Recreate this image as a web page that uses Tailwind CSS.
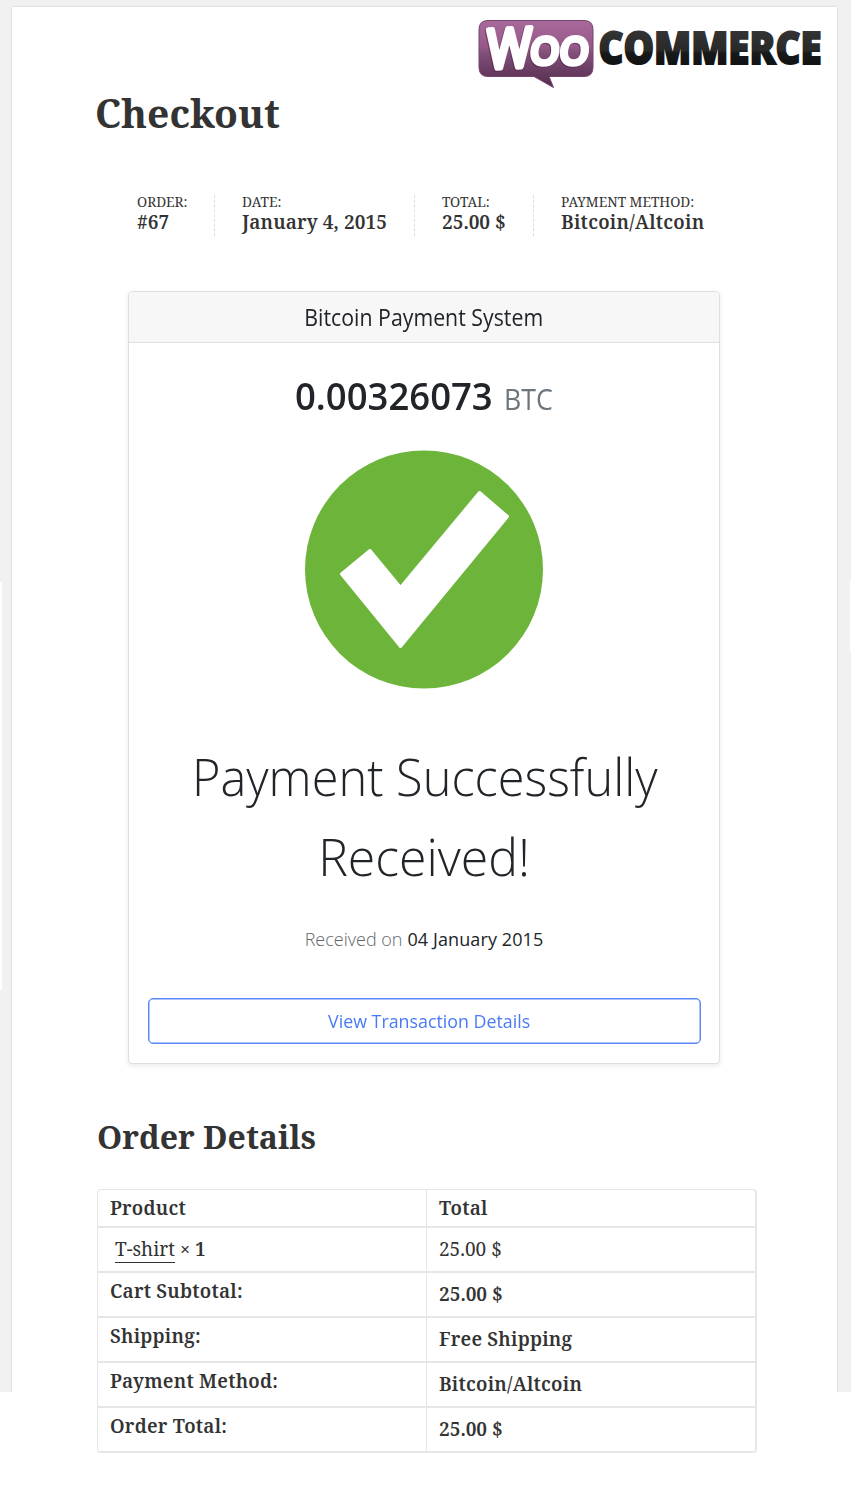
<!DOCTYPE html>
<html lang="en">
<head>
<meta charset="utf-8">
<title>Checkout</title>
<script src="https://cdn.jsdelivr.net/npm/@tailwindcss/browser@4"></script>
</head>
<body class="bg-white">
<div class="relative flex h-[1500px] w-[851px] flex-col overflow-hidden font-['Noto_Serif',serif] text-[19px] text-[#333]">
  <!-- page backdrop -->
  <div class="absolute inset-x-0 top-0 h-[1392px] overflow-hidden bg-[#f1f1f1]">
    <div class="absolute left-0 top-[582px] h-[408px] w-[2px] bg-white"></div>
    <div class="absolute right-0 top-[582px] h-[68px] w-px bg-white"></div>
    <div class="absolute left-[12px] top-[7px] h-[1390px] w-[825px] bg-white shadow-[0_0_2px_rgba(0,0,0,0.2)]"></div>
  </div>

  <header class="relative flex h-[93px] justify-end pr-[27px] pt-[18px]">
    <svg class="h-[72px] w-[348px] overflow-visible" viewBox="476 18 348 72" role="img" aria-label="WooCommerce">
      <defs>
        <linearGradient id="bubble" x1="0" y1="0" x2="0" y2="1">
          <stop offset="0" stop-color="#a86a9b"/><stop offset=".4" stop-color="#955888"/><stop offset=".48" stop-color="#82507a"/><stop offset="1" stop-color="#522b4d"/>
        </linearGradient>
        <linearGradient id="ink" gradientUnits="userSpaceOnUse" x1="0" y1="31" x2="0" y2="65">
          <stop offset="0" stop-color="#343434"/><stop offset=".58" stop-color="#282828"/><stop offset=".64" stop-color="#17191b"/><stop offset="1" stop-color="#101214"/>
        </linearGradient>
      </defs>
      <path d="M488 20.500H584Q593 20.500 593 29.500V67.500Q593 76.500 584 76.500H549L553.500 87.500L534 76.500H488Q479 76.500 479 67.500V29.500Q479 20.500 488 20.500Z" fill="url(#bubble)" stroke="#74466c" stroke-width="1"/>
      <g fill="#fff" stroke="#fff" stroke-linejoin="round" font-family="Open Sans, sans-serif" style="filter:drop-shadow(-1px 1px 0 rgba(70,30,65,.5))">
        <text transform="translate(487 68.500) skewX(-4) rotate(-3)" font-size="54" font-weight="400" stroke-width="5.500" textLength="44" lengthAdjust="spacingAndGlyphs">W</text>
        <text transform="translate(529.500 64) skewX(-5)" font-size="36.500" font-weight="400" stroke-width="5" textLength="28.500" lengthAdjust="spacingAndGlyphs">O</text>
        <text transform="translate(559 64) skewX(-5)" font-size="36.500" font-weight="400" stroke-width="5" textLength="28.500" lengthAdjust="spacingAndGlyphs">O</text>
      </g>
      <text x="598.500" y="63.700" font-family="Open Sans, sans-serif" font-weight="800" font-size="43.500" textLength="223" lengthAdjust="spacingAndGlyphs" fill="url(#ink)" stroke="url(#ink)" stroke-width="1.800">COMMERCE</text>
    </svg>
  </header>

  <h1 class="relative ml-[95px] h-[102px] text-[39px] font-bold leading-[40px]">Checkout</h1>

  <ul class="relative ml-[137px] flex h-[96px] whitespace-nowrap">
    <li class="h-[41px] w-[105px]"><div class="text-[13.700px] leading-[14px]">ORDER:</div><strong class="block font-semibold leading-[27px]">#67</strong></li>
    <li class="relative h-[41px] w-[200px]">
      <span class="absolute -left-[28px] h-[41px] border-l border-dashed border-[#dedede]"></span>
      <div class="text-[13.700px] leading-[14px]">DATE:</div><strong class="block font-semibold leading-[27px] tracking-[0.100px]">January 4, 2015</strong></li>
    <li class="relative h-[41px] w-[119px]">
      <span class="absolute -left-[28px] h-[41px] border-l border-dashed border-[#dedede]"></span>
      <div class="text-[13.700px] leading-[14px]">TOTAL:</div><strong class="block font-semibold leading-[27px]">25.00 $</strong></li>
    <li class="relative h-[41px]">
      <span class="absolute -left-[28px] h-[41px] border-l border-dashed border-[#dedede]"></span>
      <div class="text-[13.700px] leading-[14px]">PAYMENT METHOD:</div><strong class="block font-semibold leading-[27px] tracking-[0.240px]">Bitcoin/Altcoin</strong></li>
  </ul>

  <section class="relative ml-[128px] flex h-[773px] w-[592px] flex-col rounded-[4px] border border-[#dfdfdf] bg-white font-['Open_Sans',sans-serif] text-[#212529] shadow-[0_2px_5px_rgba(0,0,0,0.08)]">
    <h2 class="flex h-[51px] justify-center rounded-t-[3px] border-b border-[#dfdfdf] bg-[#f7f7f7] text-[22.800px] leading-[52px]"><span class="scale-x-[0.935]">Bitcoin Payment System</span></h2>
    <div class="flex h-[83px] justify-center gap-[11px] pt-[24px] leading-[56px]">
      <span class="-ml-[2px] w-[198px] whitespace-nowrap text-[38px] font-semibold"><span class="inline-block origin-left scale-x-[0.96]">0.00326073</span></span>
      <span class="w-[48px] whitespace-nowrap pt-[4px] text-[30px] text-[#6c757d]"><span class="inline-block origin-left scale-x-[0.89]">BTC</span></span>
    </div>
    <svg class="mt-[23px] h-[240px] w-full" viewBox="129 449 590 240">
      <circle cx="424" cy="569.500" r="119" fill="#6cb53a"/>
      <path d="M341.500 574L370 550.500L400.500 587.500L479.500 492.500L507.500 516.500L400.500 646.500Z" fill="#fff" stroke="#fff" stroke-width="3" stroke-linejoin="round"/>
    </svg>
    <p class="mt-[47px] flex flex-col items-center whitespace-nowrap text-[51px] font-light leading-[80px]"><span class="ml-[2px] scale-x-[0.955]">Payment Successfully</span><span class="scale-x-[0.98]">Received!</span></p>
    <p class="mt-[29px] flex justify-center gap-[5px] whitespace-nowrap text-[18px] leading-[28px]"><span class="font-light text-[#5f676e]">Received on</span><span class="tracking-[0.1px]">04 January 2015</span></p>
    <a class="ml-[19px] mr-[18px] mt-[45px] flex h-[46px] justify-center rounded-[5px] border border-[#5b88f7] pl-[10px] text-[18px] leading-[44px] text-[#4a7af5] shadow-[inset_0_0_0_0.500px_#5b88f7]"><span class="scale-x-[0.99]">View Transaction Details</span></a>
  </section>

  <h2 class="relative ml-[97px] mt-[53px] h-[72px] text-[32px] font-bold leading-[40px]">Order Details</h2>

  <div class="relative ml-[97px] grid w-[660px] grid-cols-[328px_1fr] whitespace-nowrap rounded-[4px] border border-r-2 border-[#e6e6e6] font-semibold tracking-[0.220px] [&>div]:border-b-2 [&>div]:border-[#e6e6e6] [&>div]:pl-[12px] [&>div:nth-child(even)]:border-l [&>div:nth-child(n+11)]:border-b">
    <div class="h-[38px] leading-[36px]">Product</div><div class="h-[38px] leading-[36px]">Total</div>
    <div class="flex h-[45px] gap-[5px] !pl-[17px] leading-[42px] tracking-normal"><span class="font-normal"><span class="inline-block h-[35px] border-b border-[#333]">T-shirt</span></span><span><span class="text-[18px]">×</span> 1</span></div><div class="h-[45px] font-normal leading-[42px] tracking-normal">25.00 $</div>
    <div class="h-[45px] leading-[37px]">Cart Subtotal:</div><div class="h-[45px] leading-[42px] tracking-normal">25.00 $</div>
    <div class="h-[45px] leading-[37px]">Shipping:</div><div class="h-[45px] leading-[42px]">Free Shipping</div>
    <div class="h-[45px] leading-[37px]">Payment Method:</div><div class="h-[45px] leading-[42px]">Bitcoin/Altcoin</div>
    <div class="h-[44px] leading-[37px]">Order Total:</div><div class="h-[44px] leading-[42px] tracking-normal">25.00 $</div>
  </div>
</div>
</body>
</html>
